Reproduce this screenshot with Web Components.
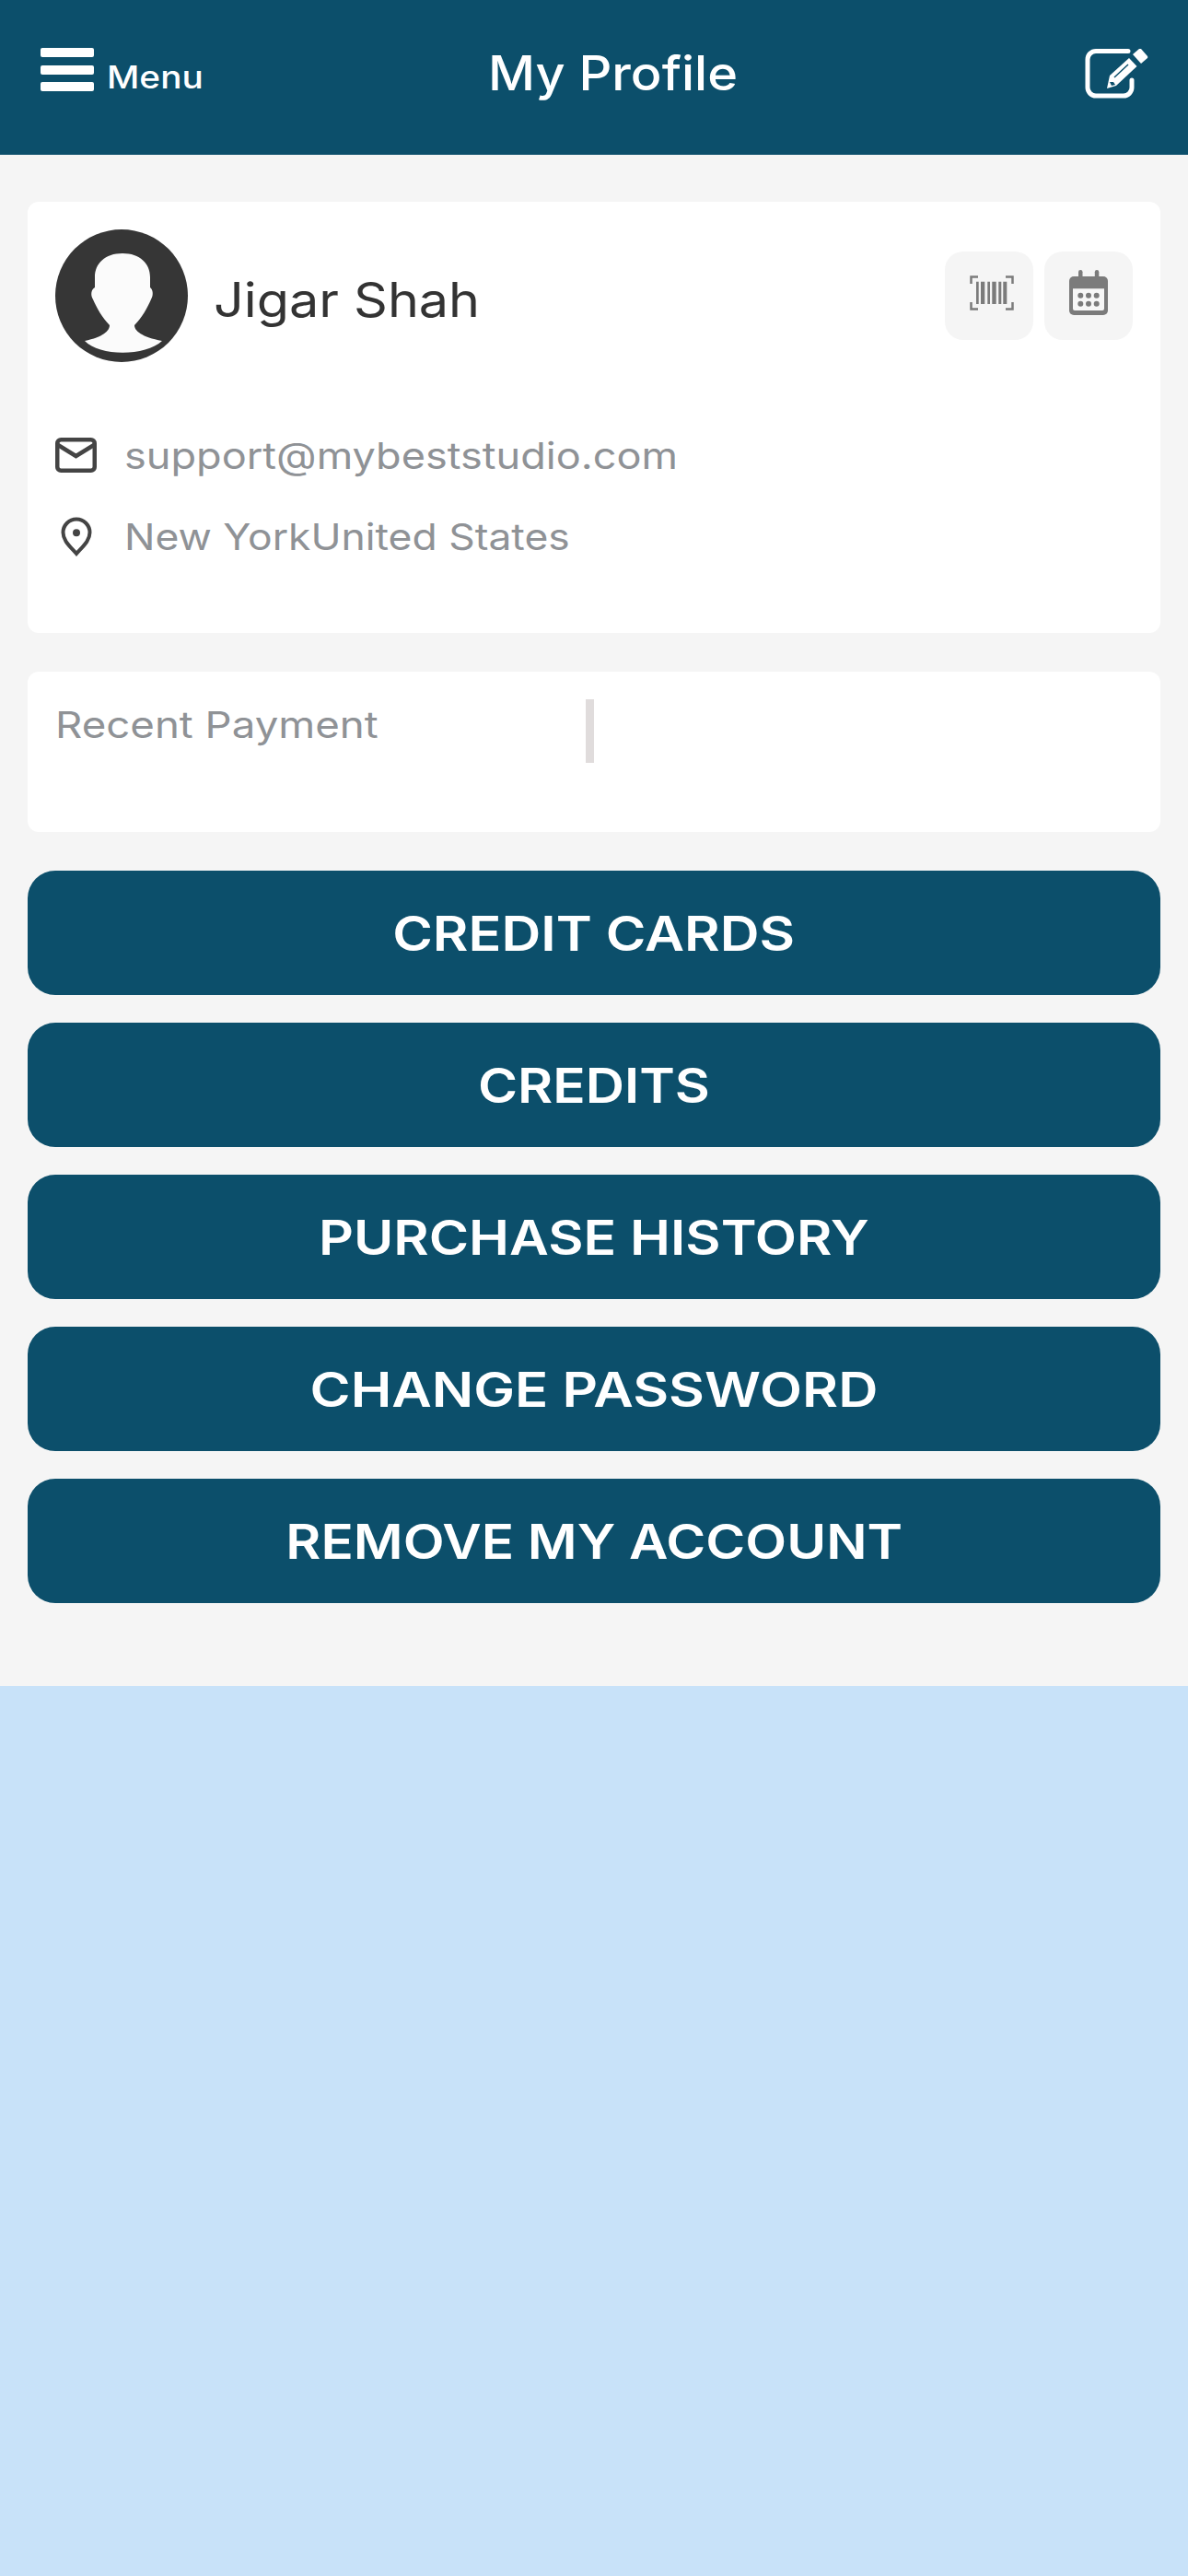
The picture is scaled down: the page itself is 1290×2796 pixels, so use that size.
<!DOCTYPE html>
<html lang="en"><head><meta charset="utf-8"><title>My Profile</title>
<style>
html,body{margin:0;padding:0}
body{background:#c8e2f9;font-family:Inter,"Liberation Sans",sans-serif;min-height:2796px}
</style></head><body>
<profile-app></profile-app>
<script>
function def(name,html){customElements.define(name,class extends HTMLElement{constructor(){super();this.attachShadow({mode:'open'}).innerHTML=html;}});}
def('app-header',`<style>
:host{display:grid;grid-template-columns:486px 1fr auto;height:168px;box-sizing:border-box;padding:50px 44px 0 44px;background:#0c4f6b;color:#fff;align-items:start}
.l{display:flex;gap:14px}.b{width:58px;height:47px;margin-top:2px;display:flex;flex-direction:column;justify-content:space-between;flex:none}
.b i{display:block;height:10px;border-radius:2px;background:#fff}
.m{font-size:34px;font-weight:500;line-height:40px;margin-top:14px;display:inline-block;transform:scaleX(1.14);transform-origin:left}
.t{font-size:52px;font-weight:500;line-height:60px;transform:scaleX(1.075);transform-origin:left;white-space:nowrap}
svg{display:block;width:70px;height:54px;margin-top:3px;margin-right:-2px}
</style><div class="l"><div class="b"><i></i><i></i><i></i></div><span class="m">Menu</span></div><div class="t">My Profile</div>
<svg viewBox="28 23 70 54"><path d="M75 25.5H40a9 9 0 0 0-9 9V65a9 9 0 0 0 9 9H70a9 9 0 0 0 9-9V57" fill="none" stroke="#fff" stroke-width="5" stroke-linecap="round"/><path d="M55 52 76 33l8.500 9L62 63l-10 3z" fill="#fff"/><path d="M60 54 75 40" stroke="#0c4f6b" stroke-width="1.500"/><path d="M55 59h4l2 3-4 1z" fill="#0c4f6b"/><path d="M80 29l7-6a2 2 0 0 1 2 0l7 8a2 2 0 0 1 0 2l-7 6z" fill="#fff"/></svg>`);
def('profile-card',`<style>
:host{display:block;background:#fff;border-radius:12px;padding:30px 30px 61px}
.top{display:flex;height:144px}
.av{display:block;width:144px;height:144px;flex:none}
.n{font-size:52px;line-height:60px;color:#333;margin:47px 0 0 28px;flex:1;transform:scaleX(1.105);transform-origin:left;white-space:nowrap}
.ib{width:96px;height:96px;border-radius:20px;background:#f5f5f5;margin:24px 0 0 12px;flex:none}
.ib svg{display:block;width:96px;height:96px}
.rows{margin-top:57px}
</style><div class="top"><svg class="av" viewBox="0 0 144 144"><circle cx="72" cy="72" r="72" fill="#363636"/><path d="M73 26C54 26 43 37 43 52V63C39 65 38 71 41 76 45 85 51 96 59 104 59 110 52 117 32 121 48 138 98 138 116 121 94 117 86 110 86 104 94 96 100 85 104 76 107 71 106 65 103 63V52C103 37 92 26 73 26Z" fill="#fbfbfb"/></svg>
<div class="n">Jigar Shah</div>
<div class="ib"><svg viewBox="0 0 96 96"><path d="M36 27.500H28.500V35M66 27.500H73.500V35M28.500 55V62.500H36M73.500 55V62.500H66" fill="none" stroke="#7b7b7b" stroke-width="2.500"/><path d="M34 32.700h2.700V57H34zM39 32.700h4.300V57H39zM46.300 32.700H49V57h-2.700zM51.300 32.700h4.400V57h-4.400zM58.300 32.700h3V57h-3zM63.300 32.700h4V57h-4z" fill="#7b7b7b"/></svg></div>
<div class="ib"><svg viewBox="0 0 96 96"><path d="M32 27H64a5 5 0 0 1 5 5V64a5 5 0 0 1-5 5H32a5 5 0 0 1-5-5V32a5 5 0 0 1 5-5Z" fill="#7b7b7b"/><rect x="37" y="20" width="4.500" height="10" rx="2.200" fill="#7b7b7b"/><rect x="54.800" y="20" width="4.500" height="10" rx="2.200" fill="#7b7b7b"/><path d="M31 40.300H65V62a2 2 0 0 1-2 2H33a2 2 0 0 1-2-2Z" fill="#f7f7f7"/><g fill="#7b7b7b"><circle cx="39.300" cy="47.700" r="3"/><circle cx="48" cy="47.700" r="3"/><circle cx="56.700" cy="47.700" r="3"/><circle cx="39.300" cy="56.700" r="3"/><circle cx="48" cy="56.700" r="3"/><circle cx="56.700" cy="56.700" r="3"/></g></svg></div></div>
<div class="rows"><slot></slot></div>`);
def('contact-row',`<style>
:host{display:flex;align-items:center;height:88px;gap:30px;font-size:40px;color:#8f9296}
.i{width:45px;display:flex;justify-content:center}
.x{display:inline-block;white-space:nowrap;transform:scaleX(var(--sx,1.1));transform-origin:left}
</style><div class="i"><slot name="icon"></slot></div><span class="x"><slot></slot></span>`);
def('recent-payment',`<style>
:host{display:flex;background:#fff;border-radius:12px;padding:30px 30px 75px;align-items:flex-start}
.t{width:576px;font-size:40px;line-height:56px;color:#8f9296}
.t span{display:inline-block;white-space:nowrap;transform:scaleX(1.14);transform-origin:left}
.d{width:9px;height:69px;background:#e0dcdc}
</style><div class="t"><span>Recent Payment</span></div><div class="d"></div>`);
def('action-button',`<style>
:host{display:flex;align-items:center;justify-content:center;box-sizing:border-box;padding-top:2px;height:135px;border-radius:30px;background:#0c4f6b;color:#fff;font-size:52px;font-weight:600}
.x{display:inline-block;white-space:nowrap;transform:scaleX(var(--sx,1.13))}
</style><span class="x"><slot></slot></span>`);
def('profile-app',`<style>
:host{display:block}
main{display:flex;flex-direction:column;background:#f5f5f5;padding:51px 30px 90px}
profile-card,recent-payment{margin-bottom:42px}
action-button{margin-bottom:30px}action-button:last-child{margin-bottom:0}
svg{display:block}
</style><app-header></app-header><main><profile-card>
<contact-row style="--sx:1.127"><svg slot="icon" width="45" height="38" viewBox="0 0 45 38" fill="none" stroke="#444" stroke-width="4.500"><rect x="2.250" y="2.250" width="40.500" height="33.500" rx="4"/><path d="M3 8 22.500 20 42 8"/></svg>support@mybeststudio.com</contact-row>
<contact-row style="--sx:1.11"><svg slot="icon" width="34" height="43" viewBox="0 0 34 43" fill="none" stroke="#444" stroke-width="4"><path d="M17 40C10 32 2.500 26 2.500 17A14.500 14.500 0 0 1 31.500 17C31.500 26 24 32 17 40Z"/><circle cx="17" cy="17.300" r="4" fill="#444" stroke="none"/></svg>New YorkUnited States</contact-row>
</profile-card><recent-payment></recent-payment>
<action-button style="--sx:1.14">CREDIT CARDS</action-button><action-button style="--sx:1.126">CREDITS</action-button><action-button style="--sx:1.133">PURCHASE HISTORY</action-button><action-button style="--sx:1.151">CHANGE PASSWORD</action-button><action-button style="--sx:1.123">REMOVE MY ACCOUNT</action-button></main>`);
</script></body></html>
